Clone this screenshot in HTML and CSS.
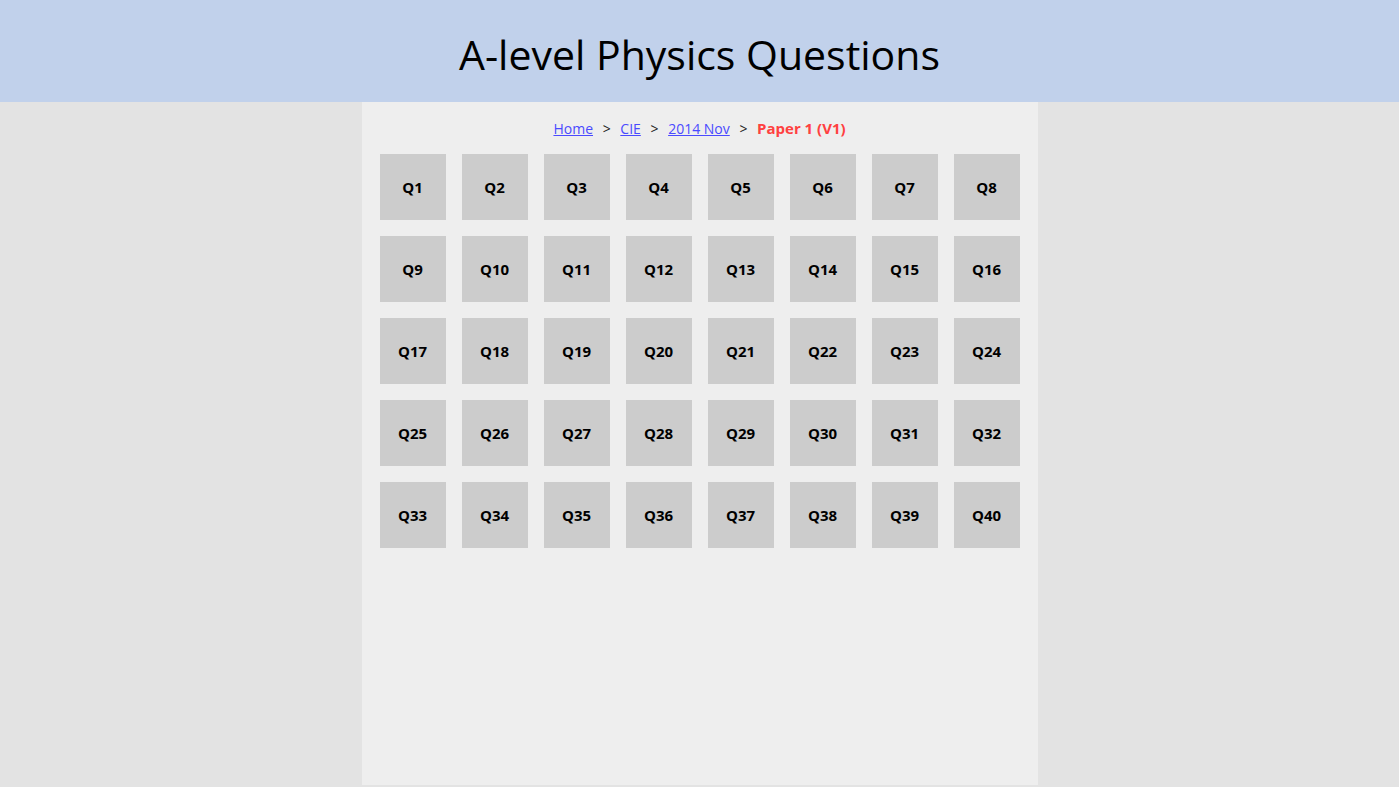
FILE: index.html
```html
<!DOCTYPE html>
<html lang="en">
<head>
  <meta charset="UTF-8">
  <title>A-level Physics Questions</title>
  <link rel="stylesheet" href="styles.css">
</head>
<body>

  <!-- Title bar -->
  <div class="header">
    <h1>A-level Physics Questions</h1>
  </div>

  <!-- Main column -->
  <div class="main">
    <div class="breadcrumb">
      <a href="#">Home</a>
      <span class="sep">&gt;</span>
      <a href="#">CIE</a>
      <span class="sep">&gt;</span>
      <a href="#">2014 Nov</a>
      <span class="sep">&gt;</span>
      <span class="current">Paper 1 (V1)</span>
    </div>

    <div class="questions" id="questions"></div>
  </div>

  <script>
    // Build the 40 question tiles
    const list = document.getElementById('questions');
    for (let i = 1; i <= 40; i++) {
      const a = document.createElement('a');
      a.className = 'question';
      a.href = '#';
      a.textContent = 'Q' + i;
      list.appendChild(a);
    }
  </script>

</body>
</html>
```

FILE: styles.css
```css
/* General body styling */
body {
  margin: 0;
  padding: 0;
  background-color: #e3e3e3;
  font-family: "Open Sans", "Noto Sans", sans-serif;
}

/* Blue title bar */
.header {
  background-color: #c1d1eb;
  height: 102px;
  box-sizing: border-box;
  padding-top: 5px;
  display: flex;
  align-items: center;
  justify-content: center;
}

.header h1 {
  margin: 0;
  font-size: 41px;
  font-weight: 400;
  color: black;
}

/* Centre column */
.main {
  width: 676px;
  margin: 0 auto;
  height: 683px;
  background-color: #eeeeee;
  box-sizing: border-box;
  padding: 15px 10px 0 10px;
}

/* Breadcrumb */
.breadcrumb {
  text-align: center;
  font-size: 14px;
  height: 22px;
  line-height: 22px;
  margin-bottom: 7px;
}

.breadcrumb a {
  color: #4a4aff;
}

.breadcrumb .sep {
  margin: 0 6px;
  color: #222;
}

.breadcrumb .current {
  color: #ff4040;
  font-weight: bold;
  font-size: 15px;
}

/* Question tiles */
.questions {
  display: flex;
  flex-wrap: wrap;
}

.question {
  width: 66px;
  height: 66px;
  margin: 8px;
  background-color: #cccccc;
  display: flex;
  align-items: center;
  justify-content: center;
  color: black;
  font-weight: bold;
  font-size: 15px;
  text-decoration: none;
}
```
